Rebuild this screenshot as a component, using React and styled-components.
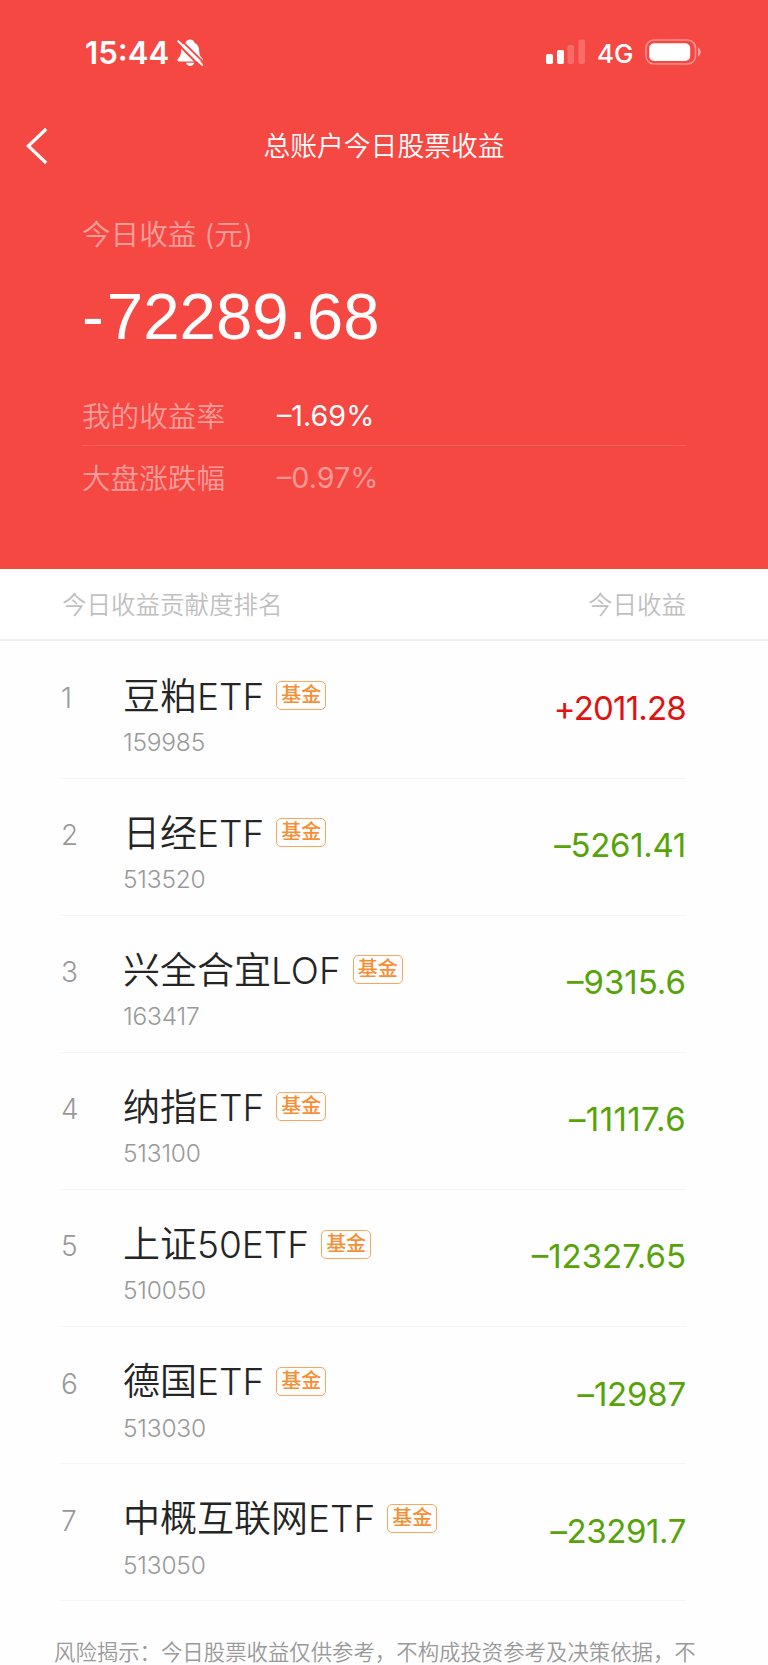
import React from "react";
import styled, { createGlobalStyle } from "styled-components";

const holdings = [
  { name: "豆粕ETF", code: "159985", profit: "+2011.28", tracking: -0.8 },
  { name: "日经ETF", code: "513520", profit: "–5261.41", tracking: -0.3 },
  { name: "兴全合宜LOF", code: "163417", profit: "–9315.6", tracking: 0 },
  { name: "纳指ETF", code: "513100", profit: "–11117.6", tracking: 0.4 },
  { name: "上证50ETF", code: "510050", profit: "–12327.65", tracking: 0 },
  { name: "德国ETF", code: "513030", profit: "–12987", tracking: -0.2 },
  { name: "中概互联网ETF", code: "513050", profit: "–23291.7", tracking: -0.4 },
];

const BellOff = () => (
  <svg width="26" height="28" viewBox="0 0 26 28">
    <path
      d="M13 0.5c2.4 0 4.2 1.3 4.5 3.2 3 1.5 4.4 4 4.6 7.3 .2 4.2 .7 6.2 3 8.2 .7 .7 .9 1.2 .9 1.9 0 .8-.6 1.3-1.5 1.3H1.8C.8 22.4.3 21.9.3 21.1c0-.7.3-1.2 1-1.9 2.2-2 2.700-4 2.900-8.200.2-3.300 1.500-5.800 4.400-7.300C9 1.800 10.600.5 13 .5z"
      fill="#fff"
    />
    <path d="M9 23.8h8.200c-.4 2-2 3.200-4.100 3.200S9.400 25.800 9 23.800z" fill="#fff" />
    <path d="M-0.300 3.800L23.600 28" stroke="#f54843" strokeWidth="2" />
    <path d="M3.300 0.300L27 23.800" stroke="#f54843" strokeWidth="1.800" />
    <path d="M1.300 2.200L25 25.800" stroke="#fff" strokeWidth="2" strokeLinecap="round" />
  </svg>
);

const Signal = () => (
  <svg width="40" height="26" viewBox="0 0 40 26" fill="#fff">
    <rect x="0" y="15" width="7" height="10" rx="1.800" />
    <rect x="11" y="11" width="7" height="14" rx="1.800" />
    <rect x="21.500" y="6" width="6.500" height="19" rx="1.800" opacity="0.2" />
    <rect x="32.500" y="0.500" width="6.500" height="24.500" rx="1.800" opacity="0.2" />
  </svg>
);

const Battery = () => (
  <svg width="57" height="26" viewBox="0 0 57 26">
    <rect x="1" y="1" width="49.500" height="24" rx="8" fill="none" stroke="#fff" strokeWidth="1.600" opacity="0.4" />
    <rect x="4.200" y="4.200" width="41" height="17.700" rx="5" fill="#fff" />
    <path d="M53 8.500c1.600.7 2.700 2.500 2.700 4.500s-1.100 3.800-2.700 4.500z" fill="#fff" opacity="0.5" />
  </svg>
);

const App = () => {
  return (
    <Screen>
      <GlobalStyle />
      <Summary>
        <StatusBar>
          <Clock>15:44</Clock>
          <BellOff />
          <StatusRight>
            <Signal />
            <Network>4G</Network>
            <Battery />
          </StatusRight>
        </StatusBar>
        <NavBar>
          <BackButton aria-label="back">
            <svg width="22" height="38" viewBox="0 0 22 38">
              <path d="M20.200 2L2.300 19l17.900 17" fill="none" stroke="#fff" strokeWidth="3.200" />
            </svg>
          </BackButton>
          <Title>总账户今日股票收益</Title>
          <span />
        </NavBar>
        <Total>
          <TotalLabel>今日收益 (元)</TotalLabel>
          <TotalValue>
            <Minus>-</Minus>72289.68
          </TotalValue>
        </Total>
        <Rates>
          <Rate>
            <RateLabel>我的收益率</RateLabel>
            <RateValue>–1.69%</RateValue>
          </Rate>
          <Rate $muted>
            <RateLabel>大盘涨跌幅</RateLabel>
            <RateValue>–0.97%</RateValue>
          </Rate>
        </Rates>
      </Summary>
      <TableHead>
        <span>今日收益贡献度排名</span>
        <span>今日收益</span>
      </TableHead>
      <List>
        {holdings.map((item, index) => (
          <Row key={item.code}>
            <Rank>{index + 1}</Rank>
            <Info>
              <NameLine>
                <Name>{item.name}</Name>
                <Badge>基金</Badge>
              </NameLine>
              <Code>{item.code}</Code>
            </Info>
            <Profit $up={item.profit.startsWith("+")} $tracking={item.tracking}>
              {item.profit}
            </Profit>
          </Row>
        ))}
      </List>
      <Notice>风险揭示：今日股票收益仅供参考，不构成投资参考及决策依据，不</Notice>
    </Screen>
  );
};

const GlobalStyle = createGlobalStyle`
  * {
    box-sizing: border-box;
  }

  body {
    margin: 0;
    background-color: #fefefe;
    font-family: Inter, "Noto Sans CJK SC", sans-serif;
    font-weight: 350;
  }
`;

const Screen = styled.div`
  width: 768px;
  height: 1665px;
  overflow: hidden;
  background-color: #fefefe;
`;

const Summary = styled.header`
  height: 568.5px;
  background-color: #f54843;
  color: #fff;
`;

const StatusBar = styled.div`
  height: 105px;
  display: flex;
  align-items: center;
  padding: 0 66px 0 85px;

  svg {
    flex: none;
  }
`;

const Clock = styled.span`
  width: 92px;
  font-size: 31.2px;
  font-weight: 600;
  line-height: 40px;
`;

const StatusRight = styled.div`
  margin: -1px 0 0 auto;
  display: flex;
  align-items: center;
`;

const Network = styled.span`
  width: 48px;
  margin: 3px 0 0 11.5px;
  padding-top: 1px;
  font-size: 26px;
  font-weight: 500;
  line-height: 30px;
`;

const NavBar = styled.nav`
  height: 81px;
  display: grid;
  grid-template-columns: 1fr auto 1fr;
  align-items: center;
`;

const BackButton = styled.button`
  display: flex;
  padding: 0 0 0 26px;
  border: none;
  background: none;
`;

const Title = styled.h1`
  margin: 0;
  font-size: 26.8px;
  font-weight: 350;
  line-height: 40px;
`;

const Total = styled.section`
  height: 197px;
  padding: 28px 82px 0;
`;

const TotalLabel = styled.div`
  font-size: 28.6px;
  line-height: 42px;
  opacity: 0.47;
`;

const TotalValue = styled.div`
  margin-top: 21px;
  font-family: "Liberation Sans", sans-serif;
  font-size: 65.4px;
  font-weight: 400;
  line-height: 80px;
`;

const Minus = styled.span`
  margin-right: 3px;
`;

const Rates = styled.section`
  margin: 0 82px;
`;

const Rate = styled.div`
  height: 62px;
  display: flex;
  align-items: center;
  color: ${({ $muted }) => ($muted ? "rgba(255, 255, 255, 0.45)" : "#fff")};

  & + & {
    height: 61px;
    border-top: 1px solid rgba(255, 255, 255, 0.15);
  }
`;

const RateLabel = styled.span`
  width: 195px;
  font-size: 28.6px;
  color: rgba(255, 255, 255, 0.47);
`;

const RateValue = styled.span`
  padding-top: 2px;
  font-size: 28.7px;
  font-weight: 400;
`;

const TableHead = styled.div`
  height: 72.5px;
  display: flex;
  justify-content: space-between;
  align-items: center;
  padding: 0 82px 0 62px;
  border-bottom: 2px solid #f0f0f0;
  background-color: #fff;
  color: #bfbfbf;
  font-size: 24.5px;
`;

const List = styled.ul`
  margin: 0;
  padding: 0.5px 82px 0 61px;
  list-style: none;
`;

const Row = styled.li`
  height: 137.15px;
  display: flex;
  border-bottom: 1.5px solid #f6f6f6;
`;

const Rank = styled.span`
  width: 62px;
  padding-top: 37.4px;
  color: #999;
  font-size: 28px;
  line-height: 38px;
`;

const Info = styled.div`
  flex: 1;
  padding-top: 30px;
`;

const NameLine = styled.div`
  display: flex;
  align-items: center;
  height: 50px;
`;

const Name = styled.span`
  color: #252525;
  font-size: 37px;
  line-height: 50px;
  white-space: nowrap;
`;

const Badge = styled.span`
  width: 50px;
  height: 29px;
  margin: -2px 0 0 12px;
  border: 1.5px solid #f9a75f;
  border-radius: 5px;
  color: #f68e34;
  font-size: 20px;
  font-weight: 500;
  line-height: 27px;
  text-align: center;
`;

const Code = styled.div`
  margin-top: 5.4px;
  color: #999;
  font-size: 24.5px;
  letter-spacing: -0.2px;
  line-height: 30px;
`;

const Profit = styled.span`
  padding-top: 45.4px;
  color: ${({ $up }) => ($up ? "#e01212" : "#57a30a")};
  font-size: 33px;
  font-weight: 400;
  letter-spacing: ${({ $tracking }) => $tracking}px;
  line-height: 42px;
`;

const Notice = styled.p`
  margin: 0;
  padding: 35.5px 0 0 54px;
  color: #999;
  font-size: 21.4px;
  line-height: 30px;
  white-space: nowrap;
`;

export default App;
